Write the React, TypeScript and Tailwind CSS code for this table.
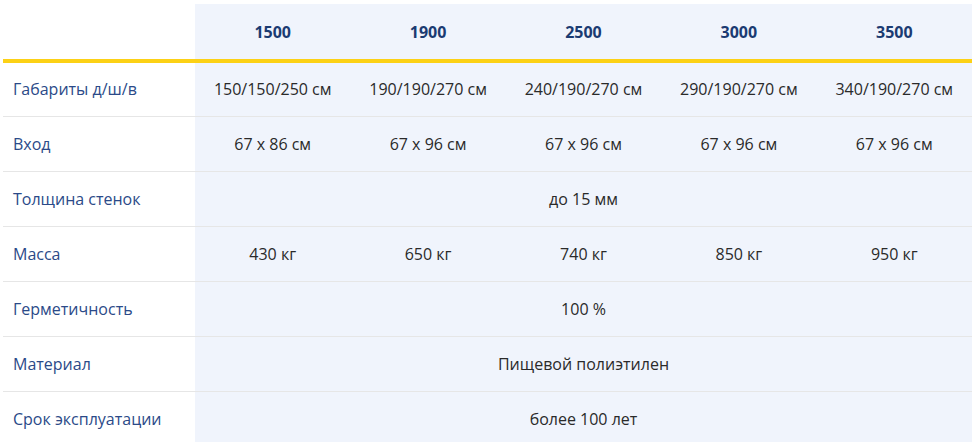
const models = ["1500", "1900", "2500", "3000", "3500"];

type Row = { label: string; values: string[] | string };

const rows: Row[] = [
  {
    label: "Габариты д/ш/в",
    values: ["150/150/250 см", "190/190/270 см", "240/190/270 см", "290/190/270 см", "340/190/270 см"],
  },
  { label: "Вход", values: ["67 x 86 см", "67 x 96 см", "67 x 96 см", "67 x 96 см", "67 x 96 см"] },
  { label: "Толщина стенок", values: "до 15 мм" },
  { label: "Масса", values: ["430 кг", "650 кг", "740 кг", "850 кг", "950 кг"] },
  { label: "Герметичность", values: "100 %" },
  { label: "Материал", values: "Пищевой полиэтилен" },
  { label: "Срок эксплуатации", values: "более 100 лет" },
];

const App = () => {
  return (
    <div className="h-[442px] w-[972px] overflow-hidden bg-white pl-[3px] pt-[4px] font-['Open_Sans',sans-serif] text-[16px]">
      <table className="w-[969px] table-fixed border-collapse">
        <colgroup>
          <col className="w-[192px]" />
          {models.map((m) => (
            <col key={m} />
          ))}
        </colgroup>
        <thead>
          <tr className="h-[57px] border-b-4 border-[#fcd116]">
            <th className="bg-white" />
            {models.map((m) => (
              <th key={m} className="bg-[#f0f4fc] text-center font-bold text-[#1b3b72]">
                {m}
              </th>
            ))}
          </tr>
        </thead>
        <tbody>
          {rows.map((r) => (
            <tr key={r.label} className="h-[55px] border-b border-[#e6e6e6]">
              <td className="bg-white pl-[10px] text-left text-[#2b4a88]">{r.label}</td>
              {Array.isArray(r.values) ? (
                r.values.map((v, i) => (
                  <td key={i} className="bg-[#f0f4fc] text-center text-[#2a2a2a]">
                    {v}
                  </td>
                ))
              ) : (
                <td colSpan={5} className="bg-[#f0f4fc] text-center text-[#2a2a2a]">
                  {r.values}
                </td>
              )}
            </tr>
          ))}
        </tbody>
      </table>
    </div>
  );
};

export default App;
